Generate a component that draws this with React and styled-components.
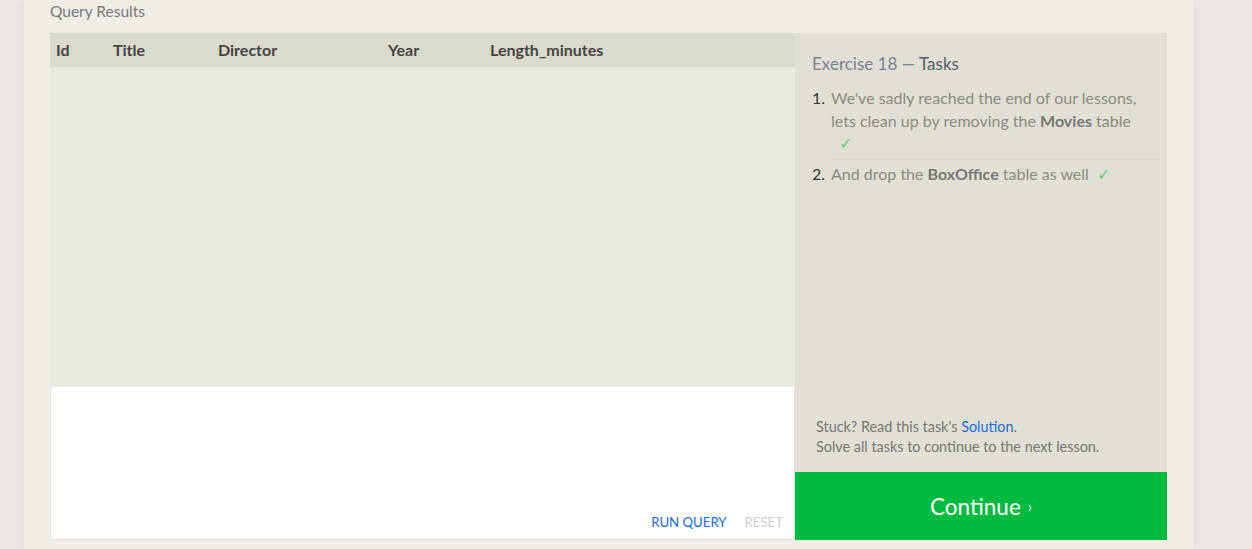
import React from 'react'
import styled, { createGlobalStyle } from 'styled-components'

const columns = [
  { name: 'Id', width: 57 },
  { name: 'Title', width: 105 },
  { name: 'Director', width: 170 },
  { name: 'Year', width: 102 },
  { name: 'Length_minutes', width: 200 }
]

const tasks = [
  { parts: ["We've sadly reached the end of our lessons, lets clean up by removing the ", <b key="m">Movies</b>, ' table'] },
  { parts: ['And drop the ', <b key="b">BoxOffice</b>, ' table as well'] }
]

export default function App() {
  return (
    <>
      <Global />
      <Page>
        <Card>
          <Label>Query Results</Label>
          <Workspace>
            <ResultsColumn>
              <HeaderRow>
                {columns.map((c) => (
                  <HeaderCell key={c.name} $w={c.width}>{c.name}</HeaderCell>
                ))}
              </HeaderRow>
              <ResultsBody />
              <Editor>
                <EditorActions>
                  <ActionLink>RUN QUERY</ActionLink>
                  <ActionLink $disabled>RESET</ActionLink>
                </EditorActions>
              </Editor>
            </ResultsColumn>
            <TaskPanel>
              <TaskContent>
                <TaskTitle>Exercise 18 — <strong>Tasks</strong></TaskTitle>
                <TaskList>
                  {tasks.map((t, i) => (
                    <TaskItem key={i}>
                      <TaskNum>{i + 1}.</TaskNum>
                      <TaskText>
                        {t.parts}
                        <Check>✓</Check>
                      </TaskText>
                    </TaskItem>
                  ))}
                </TaskList>
              </TaskContent>
              <TaskFooter>
                <p>Stuck? Read this task's <a>Solution</a>.</p>
                <p>Solve all tasks to continue to the next lesson.</p>
              </TaskFooter>
              <ContinueButton>Continue <span>›</span></ContinueButton>
            </TaskPanel>
          </Workspace>
        </Card>
      </Page>
    </>
  )
}

const Global = createGlobalStyle`
  body {
    margin: 0;
    background: #ebe7e4;
    font-family: Lato, "Open Sans", sans-serif;
  }
`

const Page = styled.div`
  height: 549px;
  overflow: hidden;
  padding-left: 24px;
`

const Card = styled.div`
  width: 1118px;
  height: 549px;
  padding: 0 26px;
  background: #efede6;
  box-shadow: 0 0 10px rgba(0, 0, 0, 0.06);
`

const Label = styled.div`
  height: 33px;
  padding-top: 2px;
  box-sizing: border-box;
  font-size: 15.5px;
  color: #777;
`

const Workspace = styled.div`
  display: flex;
  height: 507px;
`

const ResultsColumn = styled.div`
  width: 745px;
  display: flex;
  flex-direction: column;
`

const HeaderRow = styled.div`
  display: flex;
  height: 34px;
  align-items: center;
  padding: 0 0 2px 6px;
  box-sizing: border-box;
  background: #dbdbcd;
`

const HeaderCell = styled.div`
  width: ${(p) => p.$w}px;
  font-size: 16px;
  font-weight: 700;
  color: #444;
`

const ResultsBody = styled.div`
  height: 320px;
  background: #e9e9e0;
`

const Editor = styled.div`
  flex: 1;
  background: #fff;
  border: 1px solid #e4e4dc;
  border-top: none;
  display: flex;
  align-items: flex-end;
  justify-content: flex-end;
`

const EditorActions = styled.div`
  display: flex;
  gap: 18px;
  padding: 0 11px 9px 0;
`

const ActionLink = styled.span`
  font-size: 13.2px;
  color: ${(p) => (p.$disabled ? '#cccccc' : '#1a6ae0')};
`

const TaskPanel = styled.div`
  width: 372px;
  display: flex;
  flex-direction: column;
  background: #e2e0d4;
`

const TaskContent = styled.div`
  flex: 1;
  padding: 20px 18px 0 17px;
`

const TaskTitle = styled.div`
  font-size: 17px;
  color: #7b8096;
  margin-bottom: 13px;
  strong {
    font-weight: 400;
    color: #555d75;
  }
`

const TaskList = styled.ol`
  list-style: none;
  margin: 0;
  padding: 0;
`

const TaskItem = styled.li`
  display: flex;
  font-size: 16px;
  line-height: 22.5px;
  position: relative;
  &:not(:last-child) {
    padding-bottom: 5px;
    margin-bottom: 3px;
  }
  &:not(:last-child)::after {
    content: '';
    position: absolute;
    left: 19px;
    right: -11px;
    bottom: 0;
    border-bottom: 1px solid #d6d4c8;
  }
`

const TaskNum = styled.span`
  width: 19px;
  flex-shrink: 0;
  color: #333;
`

const TaskText = styled.span`
  color: #8a8a82;
  b {
    color: #777;
    font-weight: 700;
  }
`

const Check = styled.span`
  display: inline-block;
  color: #5fcf80;
  margin-left: 8px;
  padding-right: 2px;
`

const TaskFooter = styled.div`
  padding: 0 10px 15px 21px;
  font-size: 14.4px;
  line-height: 20px;
  color: #777;
  p {
    margin: 0;
  }
  a {
    color: #1a6ae0;
  }
`

const ContinueButton = styled.div`
  height: 68px;
  display: flex;
  align-items: center;
  justify-content: center;
  background: #00bb3f;
  color: #fff;
  font-size: 22.5px;
  span {
    font-size: 15px;
    margin-left: 7px;
  }
`
